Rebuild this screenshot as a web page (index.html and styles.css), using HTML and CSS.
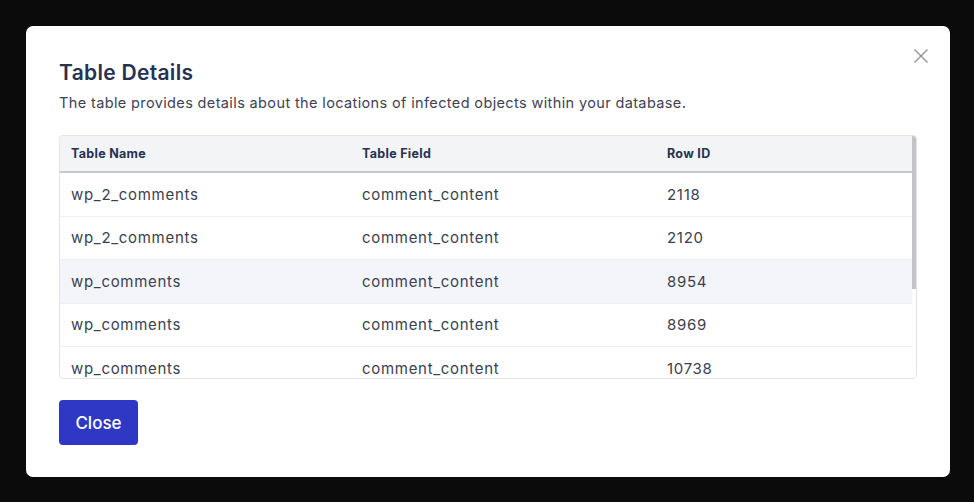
FILE: index.html
```html
<!DOCTYPE html>
<html>
<head>
<meta charset="utf-8">
<link rel="stylesheet" href="styles.css">
</head>
<body>
<div class="backdrop">
  <div class="modal">
    <button class="x" aria-label="Close">
      <svg width="16" height="16" viewBox="0 0 16 16"><path d="M1.5 1.5L14.5 14.5M14.5 1.5L1.5 14.5" stroke="#8d9097" stroke-width="1.3" fill="none"/></svg>
    </button>
    <h2 class="title">Table Details</h2>
    <p class="sub">The table provides details about the locations of infected objects within your database.</p>
    <div class="tablewrap">
      <div class="scroller">
        <div class="row head">
          <div class="c1">Table Name</div><div class="c2">Table Field</div><div class="c3">Row ID</div>
        </div>
        <div class="row"><div class="c1">wp_2_comments</div><div class="c2">comment_content</div><div class="c3">2118</div></div>
        <div class="row"><div class="c1">wp_2_comments</div><div class="c2">comment_content</div><div class="c3">2120</div></div>
        <div class="row hover"><div class="c1">wp_comments</div><div class="c2">comment_content</div><div class="c3">8954</div></div>
        <div class="row"><div class="c1">wp_comments</div><div class="c2">comment_content</div><div class="c3">8969</div></div>
        <div class="row last"><div class="c1">wp_comments</div><div class="c2">comment_content</div><div class="c3">10738</div></div>
      </div>
      <div class="track"><div class="thumb"></div></div>
    </div>
    <button class="btn">Close</button>
  </div>
</div>
</body>
</html>
```
FILE: styles.css
```css
html, body { margin: 0; padding: 0; }
body { background: #0b0b0b; font-family: Inter, "Noto Sans", sans-serif; }
.backdrop { width: 974px; height: 502px; overflow: hidden; padding-top: 26px; box-sizing: border-box; }
.modal {
  position: relative;
  margin-left: 26px;
  width: 924px;
  height: 451px;
  box-sizing: border-box;
  background: #fff;
  border-radius: 7px;
  padding: 33px 33px 0 33px;
}
.x { position: absolute; right: 21px; top: 22px; background: none; border: 0; padding: 0; width: 16px; height: 16px; cursor: pointer; }
.x svg { display: block; }
.title { margin: 0; font-size: 21px; font-weight: 600; color: #273150; line-height: 28px; letter-spacing: 0.3px; }
.sub { margin: 5px 0 0; font-size: 14.5px; color: #3d4254; line-height: 22px; letter-spacing: 0.37px; }
.tablewrap { display: flex; margin-top: 21px; width: 858px; height: 244px; border: 1px solid #e2e4e9; border-radius: 4px; box-sizing: border-box; overflow: hidden; }
.scroller { flex: 1; height: 100%; overflow: hidden; }
.track { width: 4px; background: #fff; }
.thumb { height: 153px; background: #c3c4c7; }
.row { display: flex; height: 43.5px; align-items: center; border-bottom: 1px solid #eef0f3; box-sizing: border-box; font-size: 15px; color: #3b4050; letter-spacing: 0.7px; }
.row.head { height: 37px; background: #f3f4f6; border-bottom: 2px solid #c6c8cd; font-size: 12.5px; font-weight: 700; color: #273150; letter-spacing: 0.3px; }
.row.hover { background: #f4f5fa; }
.row.last { border-bottom: 0; }
.c1 { width: 290px; padding-left: 11px; box-sizing: border-box; }
.c2 { width: 305px; padding-left: 12px; box-sizing: border-box; }
.c3 { flex: 1; padding-left: 12px; box-sizing: border-box; }
.btn { margin-top: 21px; width: 79px; height: 45px; background: #2e38c4; color: #fff; border: 0; border-radius: 4px; font-family: Inter, "Noto Sans", sans-serif; font-size: 17px; font-weight: 500; cursor: pointer; }
```
